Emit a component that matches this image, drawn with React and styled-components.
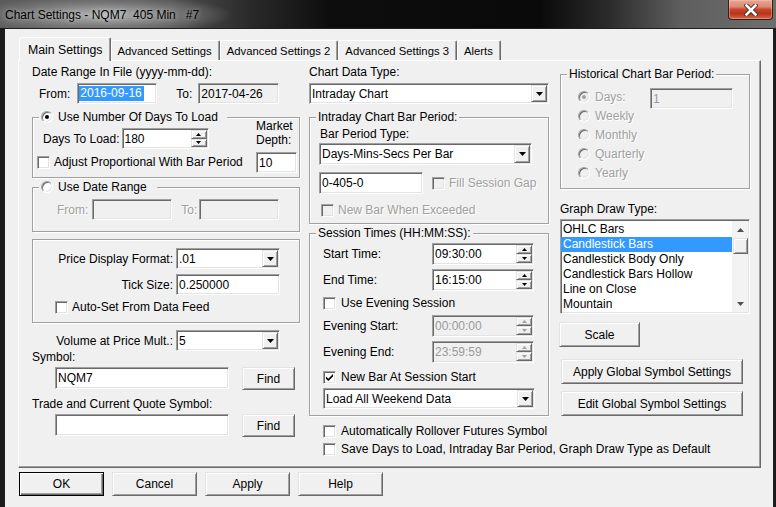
import React from 'react';
import styled, { createGlobalStyle, css } from 'styled-components';

const Global = createGlobalStyle`
  html, body { margin: 0; padding: 0; }
  body {
    width: 776px; height: 507px; overflow: hidden; background: #1b1b1b;
    font-family: "Liberation Sans", Arial, sans-serif; font-size: 12px; color: #000;
  }
  * { box-sizing: border-box; }
`;

const sunken = css`
  border: 1px solid;
  border-color: #a0a0a0 #ffffff #ffffff #a0a0a0;
  box-shadow: inset 1px 1px 0 #696969, inset -1px -1px 0 #e3e3e3;
`;

const raised = css`
  border: 1px solid;
  border-color: #e3e3e3 #696969 #696969 #e3e3e3;
  box-shadow: inset 1px 1px 0 #ffffff, inset -1px -1px 0 #a0a0a0;
`;

const Window = styled.div`
  width: 776px;
  height: 507px;
  display: flex;
  flex-direction: column;
  background: #1b1b1b;
`;

const TitleBar = styled.div`
  height: 28px;
  flex: none;
  display: flex;
  align-items: flex-start;
  background:
    radial-gradient(ellipse 130px 20px at 104px 15px, rgba(205,205,205,0.8) 0%, rgba(170,170,170,0.45) 55%, rgba(140,140,140,0) 100%),
    linear-gradient(90deg, #5c5c5c 0px, #515151 170px, #2a2a2a 250px, #0d0d0d 330px, #0a0a0a 540px, #2c2c2c 610px, #5e5e5e 680px, #6e6e6e 776px);
`;

const TitleText = styled.div`
  padding: 8px 0 0 5px;
  line-height: 14px;
  font-size: 12px;
  color: #000;
  white-space: pre;
  text-shadow: 0 0 5px rgba(255,255,255,0.55);
`;

const CloseButton = styled.div`
  margin-left: auto;
  margin-right: 3px;
  width: 45px;
  height: 20px;
  display: flex;
  align-items: center;
  justify-content: center;
  border: 1px solid #3e1d16;
  border-top: none;
  border-radius: 0 0 4px 4px;
  background: linear-gradient(180deg, #e8a594 0%, #dc8a74 35%, #c8452b 50%, #b9331a 72%, #d5684a 100%);
  box-shadow: inset 0 0 0 1px rgba(255,220,210,0.35);
`;

const Client = styled.div`
  flex: 1;
  margin: 0 2px 0 4px;
  background: #f0f0f0;
  border: 1px solid #202020;
  border-bottom: none;
  padding: 8px 0 0 13px;
  display: flex;
  flex-direction: column;
`;

const TabStrip = styled.div`
  height: 23px;
  display: flex;
  align-items: flex-end;
  padding-left: 1px;
`;

const Tab = styled.div`
  height: ${p => (p.$active ? 24 : 20)}px;
  margin-bottom: ${p => (p.$active ? -1 : 0)}px;
  padding: ${p => (p.$active ? '0 7px 0 8px' : '0 7px 0 6px')};
  font-size: ${p => (p.$active ? 12.3 : 11.3)}px;
  display: flex;
  align-items: center;
  white-space: nowrap;
  background: #f0f0f0;
  border: 1px solid;
  border-bottom: none;
  border-color: #ffffff #696969 transparent #ffffff;
  box-shadow: inset -1px 0 0 #a0a0a0;
  border-radius: 2px 2px 0 0;
  position: relative;
  z-index: ${p => (p.$active ? 2 : 1)};
`;

const Panel = styled.div`
  width: 743px;
  height: 408px;
  display: flex;
  align-items: flex-start;
  padding: 4px 0 0 13px;
  border: 1px solid;
  border-color: #ffffff #696969 #696969 #ffffff;
  box-shadow: inset -1px -1px 0 #a0a0a0;
`;

const Column = styled.div`
  display: flex;
  flex-direction: column;
  flex: none;
  width: ${p => p.$w}px;
  margin-left: ${p => p.$ml || 0}px;
`;

const Text = styled.span`
  display: block;
  flex: none;
  line-height: 14px;
  white-space: nowrap;
  width: ${p => (p.$w ? `${p.$w}px` : 'auto')};
  text-align: ${p => (p.$right ? 'right' : 'left')};
  margin-left: ${p => p.$ml || 0}px;
  margin-top: ${p => p.$mt || 0}px;
  padding-left: ${p => p.$pl || 0}px;
  color: ${p => (p.$disabled ? '#a0a0a0' : '#000')};
  text-shadow: ${p => (p.$disabled ? '1px 1px 0 #ffffff' : 'none')};
`;

const Row = styled.div`
  display: flex;
  align-items: ${p => (p.$top ? 'flex-start' : 'center')};
  margin-top: ${p => p.$mt || 0}px;
  padding-left: ${p => p.$pl || 0}px;
`;

const OptionRow = styled.div`
  display: flex;
  align-items: center;
  gap: ${p => p.$gap || 4}px;
  height: ${p => p.$h || 14}px;
  margin-top: ${p => p.$mt || 0}px;
  padding-left: ${p => p.$pl || 0}px;
  flex: none;
`;

const Field = styled.div`
  ${sunken};
  display: flex;
  align-items: center;
  flex: none;
  width: ${p => p.$w}px;
  height: ${p => p.$h || 21}px;
  margin-left: ${p => (p.$push ? 'auto' : `${p.$ml || 0}px`)};
  margin-top: ${p => p.$mt || 0}px;
  padding-left: ${p => (p.$pl === undefined ? 2 : p.$pl)}px;
  background: ${p => (p.$disabled || p.$readonly ? '#f0f0f0' : '#ffffff')};
  color: ${p => (p.$disabled ? '#9a9a9a' : '#000')};
  white-space: nowrap;
  overflow: hidden;
`;

const FieldText = styled.span`
  flex: none;
  line-height: 14px;
`;

const Highlight = styled.span`
  background: #3399ff;
  color: #ffffff;
  line-height: 15px;
  padding: 0 2px 0 1px;
`;

const DropBtn = styled.div`
  ${raised};
  flex: none;
  width: 16px;
  height: calc(100% - 2px);
  margin-left: auto;
  margin-right: 1px;
  display: flex;
  align-items: center;
  justify-content: center;
  background: #f0f0f0;
`;

const Spin = styled.div`
  flex: none;
  width: 16px;
  height: calc(100% - 2px);
  margin-left: auto;
  margin-right: 1px;
  display: flex;
  flex-direction: column;
`;

const SpinHalf = styled.div`
  ${raised};
  flex: 1;
  display: flex;
  align-items: center;
  justify-content: center;
  background: #f0f0f0;
`;

const CheckBox = styled.span`
  ${sunken};
  flex: none;
  width: 13px;
  height: 13px;
  display: inline-flex;
  align-items: center;
  justify-content: center;
  background: ${p => (p.$disabled ? '#f0f0f0' : '#ffffff')};
`;

const RadioDot = styled.span`
  flex: none;
  position: relative;
  width: 12px;
  height: 12px;
  border-radius: 50%;
  border: 1px solid;
  border-color: #a0a0a0 #ffffff #ffffff #a0a0a0;
  box-shadow: inset 1px 1px 0 #696969, inset -1px -1px 0 #e3e3e3;
  background: ${p => (p.$disabled ? '#f0f0f0' : '#ffffff')};
  &::after {
    content: '';
    display: ${p => (p.$checked ? 'block' : 'none')};
    position: absolute;
    left: 3px;
    top: 3px;
    width: 4px;
    height: 4px;
    border-radius: 50%;
    background: ${p => (p.$disabled ? '#a0a0a0' : '#000')};
  }
`;

const Group = styled.div`
  position: relative;
  flex: none;
  margin-top: ${p => p.$mt || 0}px;
  border: 1px solid #a0a0a0;
  box-shadow: inset 1px 1px 0 #ffffff, 1px 1px 0 #ffffff;
  padding: ${p => p.$pad || '0'};
  display: flex;
  flex-direction: column;
`;

const Legend = styled.div`
  position: absolute;
  top: -8px;
  left: 6px;
  height: 14px;
  padding: 0 ${p => p.$pr || 2}px 0 2px;
  display: flex;
  align-items: center;
  gap: 5px;
  background: #f0f0f0;
  line-height: 14px;
  white-space: nowrap;
`;

const SplitBody = styled.div`
  display: flex;
  justify-content: space-between;
  align-items: flex-start;
  padding: 0 2px 4px 0;
`;

const Stack = styled.div`
  display: flex;
  flex-direction: column;
  padding-top: ${p => p.$pt || 0}px;
`;

const PushButton = styled.button`
  ${p => (p.$default
    ? css`
      border: 1px solid #000;
      box-shadow: inset 1px 1px 0 #ffffff, inset -1px -1px 0 #696969, inset -2px -2px 0 #a0a0a0;
    `
    : raised)};
  flex: none;
  width: ${p => p.$w}px;
  height: ${p => p.$h || 25}px;
  margin: ${p => p.$mt || 0}px 0 0 ${p => p.$ml || 0}px;
  padding: 0;
  background: #f0f0f0;
  font: inherit;
  font-size: 12px;
  color: #000;
  display: flex;
  align-items: center;
  justify-content: center;
  white-space: nowrap;
`;

const ButtonRow = styled.div`
  display: flex;
  gap: 8px;
  margin-top: 4px;
  padding-left: 1px;
`;

const ListBox = styled.div`
  ${sunken};
  flex: none;
  width: 190px;
  height: 95px;
  margin-top: 3px;
  background: #ffffff;
  display: flex;
  overflow: hidden;
`;

const ListItems = styled.div`
  flex: 1;
  display: flex;
  flex-direction: column;
  padding-top: 2px;
`;

const ListItem = styled.div`
  flex: none;
  height: 15px;
  line-height: 15px;
  padding-left: 2px;
  white-space: nowrap;
  background: ${p => (p.$sel ? '#3399ff' : 'transparent')};
  color: ${p => (p.$sel ? '#ffffff' : '#000')};
`;

const ScrollBar = styled.div`
  flex: none;
  width: 16px;
  margin: 1px 1px 1px 0;
  display: flex;
  flex-direction: column;
  background: #f3f3f3;
`;

const ScrollArrow = styled.div`
  flex: none;
  height: ${p => p.$h}px;
  display: flex;
  align-items: center;
  justify-content: center;
`;

const ScrollThumb = styled.div`
  ${raised};
  flex: none;
  height: 16px;
  margin-left: 1px;
  background: #f0f0f0;
`;

const ScrollTrack = styled.div`
  flex: 1;
`;

const Tri = ({ up, color = '#000', w = 7, h = 4 }) => (
  <svg width={w} height={h} viewBox={`0 0 ${w} ${h}`}>
    {up
      ? <path d={`M0 ${h} L${w / 2} 0 L${w} ${h} Z`} fill={color} />
      : <path d={`M0 0 L${w} 0 L${w / 2} ${h} Z`} fill={color} />}
  </svg>
);

const CheckMark = () => (
  <svg width="9" height="9" viewBox="0 0 9 9">
    <path d="M1 3.5 L3.3 5.8 L8 1.1 L8 3.4 L3.3 8.1 L1 5.8 Z" fill="#000" />
  </svg>
);

const Check = ({ checked, disabled }) => (
  <CheckBox $disabled={disabled}>{checked && <CheckMark />}</CheckBox>
);

const Select = ({ w, h, ml, children }) => (
  <Field $w={w} $h={h} $ml={ml}>
    <FieldText>{children}</FieldText>
    <DropBtn><Tri /></DropBtn>
  </Field>
);

const SpinField = ({ w, h, ml, disabled, children }) => (
  <Field $w={w} $h={h} $ml={ml} $disabled={disabled}>
    <FieldText>{children}</FieldText>
    <Spin>
      <SpinHalf><Tri up w={5} h={3} color={disabled ? '#a0a0a0' : '#000'} /></SpinHalf>
      <SpinHalf><Tri w={5} h={3} color={disabled ? '#a0a0a0' : '#000'} /></SpinHalf>
    </Spin>
  </Field>
);

const Option = ({ checked, disabled, label, ...rest }) => (
  <OptionRow {...rest}>
    <Check checked={checked} disabled={disabled} />
    <Text $disabled={disabled}>{label}</Text>
  </OptionRow>
);

const TABS = ['Main Settings', 'Advanced Settings', 'Advanced Settings 2', 'Advanced Settings 3', 'Alerts'];
const DRAW_TYPES = ['OHLC Bars', 'Candlestick Bars', 'Candlestick Body Only', 'Candlestick Bars Hollow', 'Line on Close', 'Mountain'];
const PERIODS = ['Weekly', 'Monthly', 'Quarterly', 'Yearly'];

export default function App() {
  return (
    <>
      <Global />
      <Window>
        <TitleBar>
          <TitleText>{'Chart Settings - NQM7  405 Min   #7'}</TitleText>
          <CloseButton aria-label="Close">
            <svg width="14" height="12" viewBox="0 0 14 12">
              <path d="M2.5 1.5 L11.5 10.5 M11.5 1.5 L2.5 10.5" stroke="#4a2620" strokeWidth="4.4" strokeLinecap="square" />
              <path d="M2.5 1.5 L11.5 10.5 M11.5 1.5 L2.5 10.5" stroke="#ffffff" strokeWidth="2.6" strokeLinecap="square" />
            </svg>
          </CloseButton>
        </TitleBar>
        <Client>
          <TabStrip>
            {TABS.map((t, i) => (
              <Tab key={t} $active={i === 0}>{t}</Tab>
            ))}
          </TabStrip>
          <Panel>
            {/* Left column */}
            <Column $w={268}>
              <Text>Date Range In File (yyyy-mm-dd):</Text>
              <Row $mt={4} $pl={7}>
                <Text>From:</Text>
                <Field $w={80} $ml={7} $pl={1}><Highlight>2016-09-16</Highlight></Field>
                <Text $ml={19}>To:</Text>
                <Field $w={81} $ml={6} $readonly><FieldText>2017-04-26</FieldText></Field>
              </Row>

              <Group $mt={13}>
                <Legend $pr={9}>
                  <RadioDot $checked />
                  <Text>Use Number Of Days To Load</Text>
                </Legend>
                <SplitBody>
                  <Stack>
                    <Row $mt={10} $pl={10}>
                      <Text>Days To Load:</Text>
                      <SpinField w={87} ml={2}>180</SpinField>
                    </Row>
                    <Option $mt={6} $pl={4} label="Adjust Proportional With Bar Period" />
                  </Stack>
                  <Stack $pt={1}>
                    <Text>Market</Text>
                    <Text>Depth:</Text>
                    <Field $w={41} $mt={5}><FieldText>10</FieldText></Field>
                  </Stack>
                </SplitBody>
              </Group>

              <Group $mt={9} $pad="0 0 11px 0">
                <Legend $pr={10}>
                  <RadioDot />
                  <Text>Use Date Range</Text>
                </Legend>
                <Row $mt={11} $pl={24}>
                  <Text $disabled>From:</Text>
                  <Field $w={80} $ml={4} $disabled />
                  <Text $disabled $ml={9}>To:</Text>
                  <Field $w={80} $ml={2} $disabled />
                </Row>
              </Group>

              <Group $mt={7} $pad="0 0 8px 0">
                <Row $mt={8}>
                  <Text $w={140} $right>Price Display Format:</Text>
                  <Select w={104} ml={3}>.01</Select>
                </Row>
                <Row $mt={5}>
                  <Text $w={140} $right>Tick Size:</Text>
                  <Field $w={104} $ml={3}><FieldText>0.250000</FieldText></Field>
                </Row>
                <Option $mt={5} $pl={22} label="Auto-Set From Data Feed" />
              </Group>

              <Row $mt={7}>
                <Text $w={141} $right>Volume at Price Mult.:</Text>
                <Select w={104} ml={3}>5</Select>
              </Row>
              <Text $mt={-1}>Symbol:</Text>
              <Row $mt={3} $pl={23} $top>
                <Field $w={174} $h={22}><FieldText>NQM7</FieldText></Field>
                <PushButton $w={53} $h={23} $ml={13}>Find</PushButton>
              </Row>
              <Text $mt={7}>Trade and Current Quote Symbol:</Text>
              <Row $mt={3} $pl={23} $top>
                <Field $w={174} $h={22} />
                <PushButton $w={53} $h={23} $ml={13}>Find</PushButton>
              </Row>
            </Column>

            {/* Middle column */}
            <Column $w={240} $ml={9}>
              <Text>Chart Data Type:</Text>
              <Row $mt={4}>
                <Select w={240}>Intraday Chart</Select>
              </Row>

              <Group $mt={13} $pad="0 0 6px 9px">
                <Legend><Text>Intraday Chart Bar Period:</Text></Legend>
                <Text $mt={9} $pl={1}>Bar Period Type:</Text>
                <Row $mt={2}>
                  <Select w={213} h={22}>Days-Mins-Secs Per Bar</Select>
                </Row>
                <Row $mt={7}>
                  <Field $w={104} $h={22}><FieldText>0-405-0</FieldText></Field>
                  <Option $pl={9} disabled label="Fill Session Gap" />
                </Row>
                <Option $mt={9} $pl={2} disabled label="New Bar When Exceeded" />
              </Group>

              <Group $mt={9} $pad="0 0 6px 13px">
                <Legend><Text>Session Times (HH:MM:SS):</Text></Legend>
                <Row $mt={9}>
                  <Text $w={109}>Start Time:</Text>
                  <SpinField w={102} h={22}>09:30:00</SpinField>
                </Row>
                <Row $mt={4}>
                  <Text $w={109}>End Time:</Text>
                  <SpinField w={102} h={22}>16:15:00</SpinField>
                </Row>
                <Option $mt={5} $gap={5} label="Use Evening Session" />
                <Row $mt={5}>
                  <Text $w={109}>Evening Start:</Text>
                  <SpinField w={102} h={22} disabled>00:00:00</SpinField>
                </Row>
                <Row $mt={4}>
                  <Text $w={109}>Evening End:</Text>
                  <SpinField w={102} h={22} disabled>23:59:59</SpinField>
                </Row>
                <Option $mt={7} $gap={5} checked label="New Bar At Session Start" />
                <Row $mt={4}>
                  <Select w={212}>Load All Weekend Data</Select>
                </Row>
              </Group>

              <Option $mt={8} $pl={14} $gap={5} label="Automatically Rollover Futures Symbol" />
              <Option $mt={4} $pl={14} $gap={5} label="Save Days to Load, Intraday Bar Period, Graph Draw Type as Default" />
            </Column>

            {/* Right column */}
            <Column $w={190} $ml={11}>
              <Group $mt={9} $pad="12px 16px 6px 17px">
                <Legend><Text>Historical Chart Bar Period:</Text></Legend>
                <OptionRow $h={19} $gap={5}>
                  <RadioDot $checked $disabled />
                  <Text $disabled>Days:</Text>
                  <Field $w={83} $push $mt={4} $disabled><FieldText>1</FieldText></Field>
                </OptionRow>
                {PERIODS.map(p => (
                  <OptionRow key={p} $h={19} $gap={5}>
                    <RadioDot $disabled />
                    <Text $disabled>{p}</Text>
                  </OptionRow>
                ))}
              </Group>

              <Text $mt={13}>Graph Draw Type:</Text>
              <ListBox>
                <ListItems>
                  {DRAW_TYPES.map((d, i) => (
                    <ListItem key={d} $sel={i === 1}>{d}</ListItem>
                  ))}
                </ListItems>
                <ScrollBar>
                  <ScrollArrow $h={17}><Tri up w={7} h={4} color="#505050" /></ScrollArrow>
                  <ScrollThumb />
                  <ScrollTrack />
                  <ScrollArrow $h={16}><Tri w={7} h={4} color="#505050" /></ScrollArrow>
                </ScrollBar>
              </ListBox>

              <PushButton $w={81} $mt={8} $ml={-1}>Scale</PushButton>
              <PushButton $w={182} $mt={12} $ml={1}>Apply Global Symbol Settings</PushButton>
              <PushButton $w={182} $mt={7} $ml={1}>Edit Global Symbol Settings</PushButton>
            </Column>
          </Panel>
          <ButtonRow>
            <PushButton $w={85} $h={24} $default>OK</PushButton>
            <PushButton $w={85} $h={24}>Cancel</PushButton>
            <PushButton $w={85} $h={24}>Apply</PushButton>
            <PushButton $w={85} $h={24}>Help</PushButton>
          </ButtonRow>
        </Client>
      </Window>
    </>
  );
}
